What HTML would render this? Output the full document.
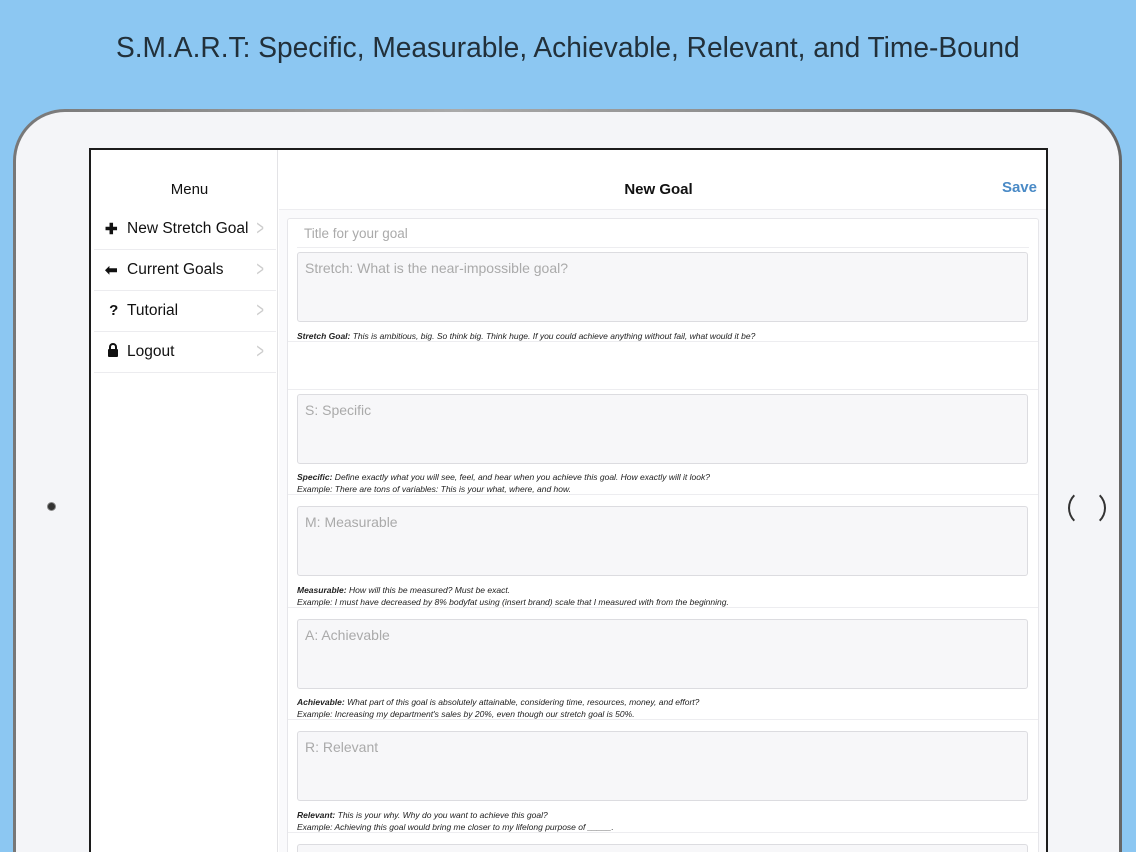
<!DOCTYPE html>
<html><head><meta charset="utf-8"><style>
*{margin:0;padding:0;box-sizing:border-box}
html{width:1136px;height:852px;overflow:hidden}
body{width:1136px;height:852px;overflow:hidden;background:#8cc7f2;font-family:"Liberation Sans",Arial,sans-serif;position:relative}
.title{position:absolute;top:32px;left:0;width:1136px;text-align:center;font-size:29px;color:#22303a;white-space:nowrap}
.title span{display:inline-block;transform:scaleX(0.97);transform-origin:center}
.dev{position:absolute;left:13px;top:109px;width:1109px;height:743px;border-radius:52px 52px 0 0;background:linear-gradient(90deg,#777,#aaa 40%,#888 70%,#666);}
.face{position:absolute;left:16px;top:112px;width:1103px;height:740px;border-radius:49px 49px 0 0;background:#f4f5f8;}
.cam{position:absolute;left:47px;top:502px;width:9px;height:9px;border-radius:50%;background:#333;border:1px solid #888}
.home{position:absolute;left:1068px;top:489px;width:38px;height:38px;border-radius:50%;border:2px solid #333;border-top-color:transparent;border-bottom-color:transparent}
.scr{position:absolute;left:89px;top:148px;width:959px;height:704px;border:2px solid #1c1c1c;border-bottom:none;background:#fff;overflow:hidden}
.side{position:absolute;left:0;top:0;width:187px;height:702px;background:#fff;border-right:1px solid #e3e3e6}
.side h3{position:absolute;top:31px;width:187px;text-align:center;font-size:15px;font-weight:normal;color:#111;left:5px}
.row{position:absolute;left:3px;width:182px;height:41px;border-bottom:1px solid #ececef;font-size:15.5px;color:#111}
.row .ic{position:absolute;left:11px;top:11px;font-weight:bold;font-size:15px;width:18px}
.row .t{position:absolute;left:33px;top:11px}
.row .ch{position:absolute;left:160px;top:8px;color:#ccc;font-size:21px;transform:scaleX(.6)}
.main{position:absolute;left:188px;top:0;width:769px;height:702px;background:#fafafc;overflow:hidden}
.hdr{position:absolute;left:0;top:0;width:769px;height:60px;background:#fff;border-bottom:1px solid #ededf0}
.hdr .n{position:absolute;top:31px;left:-5px;width:769px;text-align:center;font-size:15px;font-weight:bold;color:#111}
.hdr .s{position:absolute;top:29px;right:11px;font-size:15px;font-weight:bold;color:#4a8ac6}
.card{position:absolute;left:8px;top:68px;width:752px;height:640px;background:#fff;border:1px solid #e6e6ea;border-bottom:none;border-radius:3px 3px 0 0;overflow:hidden}
.ta{position:absolute;left:9px;width:731px;height:70px;border:1px solid #dcdce0;border-radius:3px;background:#f7f7f9;font-size:14px;color:#aaa;padding:7px 7px}
.hl{position:absolute;left:9px;font-size:8.5px;font-style:italic;color:#222;line-height:12px;white-space:nowrap}
.hl b{font-weight:bold}
.sep{position:absolute;left:0;width:750px;border-top:1px solid #ededf0}
</style></head><body>
<div class="title"><span>S.M.A.R.T: Specific, Measurable, Achievable, Relevant, and Time-Bound</span></div>
<div class="dev"></div><div class="face"></div>
<div class="cam"></div><div class="home"></div>
<div class="scr">
 <div class="side">
  <h3>Menu</h3>
  <div class="row" style="top:59px"><span class="ic">✚</span><span class="t">New Stretch Goal</span><span class="ch">&gt;</span></div>
  <div class="row" style="top:100px"><span class="ic">⬅</span><span class="t">Current Goals</span><span class="ch">&gt;</span></div>
  <div class="row" style="top:141px"><span class="ic">&nbsp;?</span><span class="t">Tutorial</span><span class="ch">&gt;</span></div>
  <div class="row" style="top:182px"><span class="ic">
   <svg width="12" height="14" viewBox="0 0 12 14" style="margin-left:2px"><path d="M3 6V4a3 3 0 0 1 6 0v2" fill="none" stroke="#111" stroke-width="2"/><rect x="1" y="6" width="10" height="8" rx="1" fill="#111"/></svg></span><span class="t">Logout</span><span class="ch">&gt;</span></div>
 </div>
 <div class="main">
  <div class="hdr"><div class="n">New Goal</div><div class="s">Save</div></div>
  <div class="card">
   <div style="position:absolute;left:16px;top:7px;font-size:13.5px;color:#aaa">Title for your goal</div>
   <div class="sep" style="top:28px;left:9px;width:732px"></div>
   <div class="ta" style="top:33px">Stretch: What is the near-impossible goal?</div>
   <div class="hl" style="top:111px"><b>Stretch Goal:</b> This is ambitious, big. So think big. Think huge. If you could achieve anything without fail, what would it be?</div>
   <div class="sep" style="top:122px"></div>
   <div class="sep" style="top:170px"></div>
   <div class="ta" style="top:175px">S: Specific</div>
   <div class="hl" style="top:252px"><b>Specific:</b> Define exactly what you will see, feel, and hear when you achieve this goal. How exactly will it look?<br>Example: There are tons of variables: This is your what, where, and how.</div>
   <div class="sep" style="top:275px"></div>
   <div class="ta" style="top:287px">M: Measurable</div>
   <div class="hl" style="top:365px"><b>Measurable:</b> How will this be measured? Must be exact.<br>Example: I must have decreased by 8% bodyfat using (insert brand) scale that I measured with from the beginning.</div>
   <div class="sep" style="top:388px"></div>
   <div class="ta" style="top:400px">A: Achievable</div>
   <div class="hl" style="top:477px"><b>Achievable:</b> What part of this goal is absolutely attainable, considering time, resources, money, and effort?<br>Example: Increasing my department's sales by 20%, even though our stretch goal is 50%.</div>
   <div class="sep" style="top:500px"></div>
   <div class="ta" style="top:512px">R: Relevant</div>
   <div class="hl" style="top:590px"><b>Relevant:</b> This is your why. Why do you want to achieve this goal?<br>Example: Achieving this goal would bring me closer to my lifelong purpose of _____.</div>
   <div class="sep" style="top:613px"></div>
   <div class="ta" style="top:625px;height:20px;border-bottom:none"></div>
  </div>
 </div>
</div>
</body></html>
